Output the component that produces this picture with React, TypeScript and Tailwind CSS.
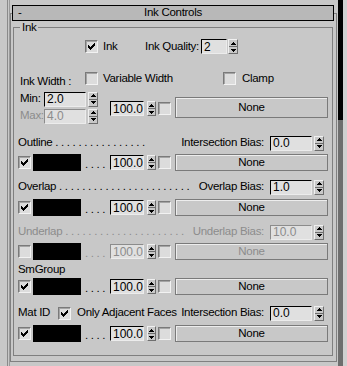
import React from "react";

const font = "font-['Liberation_Sans',Arial,sans-serif]";

function CheckMark() {
  return (
    <svg width="7" height="7" viewBox="0 0 7 7" shapeRendering="crispEdges">
      <path
        d="M6 0h1v1H6z M5 1h2v1H5z M0 2h1v1H0z M4 2h3v1H4z M0 3h2v1H0z M3 3h3v1H3z M0 4h5v1H0z M1 5h3v1H1z M2 6h1v1H2z"
        fill="#000"
      />
    </svg>
  );
}

function CheckBox({ checked = false, className = "" }: { checked?: boolean; className?: string }) {
  return (
    <span
      className={`flex h-[13px] w-[13px] shrink-0 items-center justify-center border border-t-[#7a7a7a] border-l-[#7a7a7a] border-r-[#f2f2f2] border-b-[#f2f2f2] bg-[#dcdcdc] shadow-[inset_1px_1px_0_#a4a4a4] ${className}`}
    >
      {checked && <CheckMark />}
    </span>
  );
}

function Arrow({ down = false }: { down?: boolean }) {
  return (
    <svg width="5" height="3" viewBox="0 0 5 3" shapeRendering="crispEdges">
      <path
        d={down ? "M0 0h5v1H0z M1 1h3v1H1z M2 2h1v1H2z" : "M2 0h1v1H2z M1 1h3v1H1z M0 2h5v1H0z"}
        fill="#000"
      />
    </svg>
  );
}

function Spinner({ wide = false, className = "" }: { wide?: boolean; className?: string }) {
  return (
    <span
      className={`flex h-[15px] shrink-0 flex-col border border-t-[#f0f0f0] border-l-[#f0f0f0] border-r-[#6e6e6e] border-b-[#6e6e6e] bg-[#c8c8c8] ${wide ? "w-[10px]" : "w-[9px]"} ${className}`}
    >
      <span className="flex flex-1 items-center justify-center border-b border-[#6e6e6e]">
        <Arrow />
      </span>
      <span className="flex flex-1 items-center justify-center">
        <Arrow down />
      </span>
    </span>
  );
}

function NumBox({ value, disabled = false, className = "" }: { value: string; disabled?: boolean; className?: string }) {
  return (
    <span
      className={`flex h-[15px] shrink-0 items-center border border-r-[#ececec] border-b-[#ececec] bg-[#e0e0e0] pl-[2px] text-[12px] tracking-normal ${disabled ? "border-t-[#8c8c8c] border-l-[#8c8c8c] text-[#8c8c8c]" : "border-t-black border-l-black text-black"} ${className}`}
    >
      {value}
    </span>
  );
}

function NoneButton({ disabled = false, tall = false }: { disabled?: boolean; tall?: boolean }) {
  return (
    <span
      className={`ml-[4px] flex w-[153px] shrink-0 items-center justify-center border border-[#7a7a7a] bg-[#c8c8c8] shadow-[inset_1px_1px_0_#ededed] ${tall ? "h-[21px]" : "h-[17px]"} ${disabled ? "text-[#8c8c8c]" : ""}`}
    >
      None
    </span>
  );
}

function Tail({ disabled = false }: { disabled?: boolean }) {
  return (
    <>
      <NumBox value="100.0" disabled={disabled} className="w-[34px]" />
      <Spinner className="ml-[3px]" />
      <CheckBox className="ml-[2px]" />
    </>
  );
}

function InkRow({ checked = false, disabled = false, className = "" }: { checked?: boolean; disabled?: boolean; className?: string }) {
  return (
    <div className={`flex h-[19px] items-center ${className}`}>
      <CheckBox checked={checked} className="ml-[4px]" />
      <span className="ml-[2px] h-[17px] w-[48px] shrink-0 bg-black" />
      <span className={`ml-[4px] w-[21px] shrink-0 self-end whitespace-nowrap pb-[2px] ${disabled ? "text-[#8c8c8c]" : ""}`}>
        . . . .
      </span>
      <span className="ml-[4px] flex items-center">
        <Tail disabled={disabled} />
      </span>
      <NoneButton disabled={disabled} />
    </div>
  );
}

function BiasField({ label, value, disabled = false }: { label: string; value: string; disabled?: boolean }) {
  return (
    <>
      <span className={`ml-[4px] shrink-0 whitespace-nowrap ${disabled ? "text-[#8c8c8c]" : ""}`}>{label}</span>
      <NumBox value={value} disabled={disabled} className="ml-[6px] w-[42px]" />
      <Spinner wide className="ml-[2px]" />
      <span className="w-[8px] shrink-0" />
    </>
  );
}

const leader = (n: number) => " .".repeat(n);

export default function App() {
  return (
    <div
      className={`flex h-[366px] w-[347px] overflow-hidden bg-[#c8c8c8] text-[11.5px] leading-none tracking-[-0.3px] text-black ${font}`}
    >
      <div className="w-[7px] shrink-0" />
      <div className="w-px shrink-0 bg-[#8a8a8a]" />
      <div className="w-px shrink-0" />
      <div className="w-px shrink-0 bg-[#9a9a9a]" />

      <div className="mt-[13px] flex h-[349px] w-[327px] shrink-0 flex-col border border-[#808080]">
        <div className="-mt-[9px] ml-[1px] flex h-[16px] w-[322px] shrink-0 items-center border border-black bg-[#b8b8b8]">
          <span className="w-[10px] pl-[5px]">-</span>
          <span className="flex-1 text-center">Ink Controls</span>
          <span className="w-[10px]" />
        </div>

        <fieldset className="ml-[2px] h-[335px] w-[320px] min-w-0 shrink-0 border border-[#7f7f7f]">
          <legend className="ml-[6px] h-[13px] px-[2px] leading-[13px]">Ink</legend>
          <div className="flex min-w-0 flex-col">
            <div className="mt-[4px] flex h-[17px] items-center">
              <CheckBox checked className="ml-[71px]" />
              <span className="ml-[5px] w-[42px]">Ink</span>
              <span className="w-[56px] whitespace-nowrap">Ink Quality:</span>
              <NumBox value="2" className="w-[26px]" />
              <Spinner wide className="ml-[1px]" />
            </div>

            <div className="mt-[17px] flex h-[13px] items-start">
              <span className="ml-[6px] mt-[4px] w-[65px] whitespace-nowrap">Ink Width :</span>
              <CheckBox />
              <span className="ml-[5px] mt-[1px] w-[120px] whitespace-nowrap">Variable Width</span>
              <CheckBox />
              <span className="ml-[6px] mt-[1px]">Clamp</span>
            </div>

            <div className="mt-[6px] flex h-[33px] items-center">
              <div className="ml-[6px] flex flex-col gap-px">
                <div className="flex h-[16px] items-center">
                  <span className="w-[24px]">Min:</span>
                  <NumBox value="2.0" className="w-[42px]" />
                  <Spinner wide className="ml-[2px]" />
                </div>
                <div className="flex h-[16px] items-center">
                  <span className="w-[24px] text-[#8c8c8c]">Max:</span>
                  <NumBox value="4.0" disabled className="w-[42px]" />
                  <Spinner wide className="ml-[2px]" />
                </div>
              </div>
              <span className="ml-[12px] mt-[2px] flex items-center">
                <Tail />
              </span>
              <NoneButton tall />
            </div>

            <div className="mt-[11px] flex h-[16px] items-center">
              <span className="ml-[4px] min-w-0 flex-1 whitespace-nowrap">Outline{leader(16)}</span>
              <BiasField label="Intersection Bias:" value="0.0" />
            </div>
            <InkRow checked className="mt-[2px]" />

            <div className="mt-[7px] flex h-[16px] items-center">
              <span className="ml-[4px] min-w-0 flex-1 whitespace-nowrap">Overlap{leader(23)}</span>
              <BiasField label="Overlap Bias:" value="1.0" />
            </div>
            <InkRow checked className="mt-[3px]" />

            <div className="mt-[7px] flex h-[16px] items-center">
              <span className="ml-[4px] min-w-0 flex-1 whitespace-nowrap text-[#8c8c8c]">Underlap{leader(21)}</span>
              <BiasField label="Underlap Bias:" value="10.0" disabled />
            </div>
            <InkRow disabled className="mt-[2px]" />

            <div className="mt-[2px] flex h-[13px] items-center">
              <span className="ml-[4px]">SmGroup</span>
            </div>
            <InkRow checked className="mt-[1px]" />

            <div className="mt-[9px] flex h-[16px] items-center">
              <span className="ml-[4px] w-[40px] whitespace-nowrap">Mat ID</span>
              <CheckBox checked />
              <span className="ml-[6px] min-w-0 flex-1 whitespace-nowrap">Only Adjacent Faces</span>
              <BiasField label="Intersection Bias:" value="0.0" />
            </div>
            <InkRow checked className="mt-[3px]" />
          </div>
        </fieldset>
      </div>

      <div className="w-px shrink-0" />
      <div className="flex w-[5px] shrink-0 flex-col">
        <div className="h-[120px] bg-black" />
        <div className="flex-1 bg-[#6e6e6e]" />
      </div>
      <div className="flex-1 bg-[#d0d0d0]" />
    </div>
  );
}
